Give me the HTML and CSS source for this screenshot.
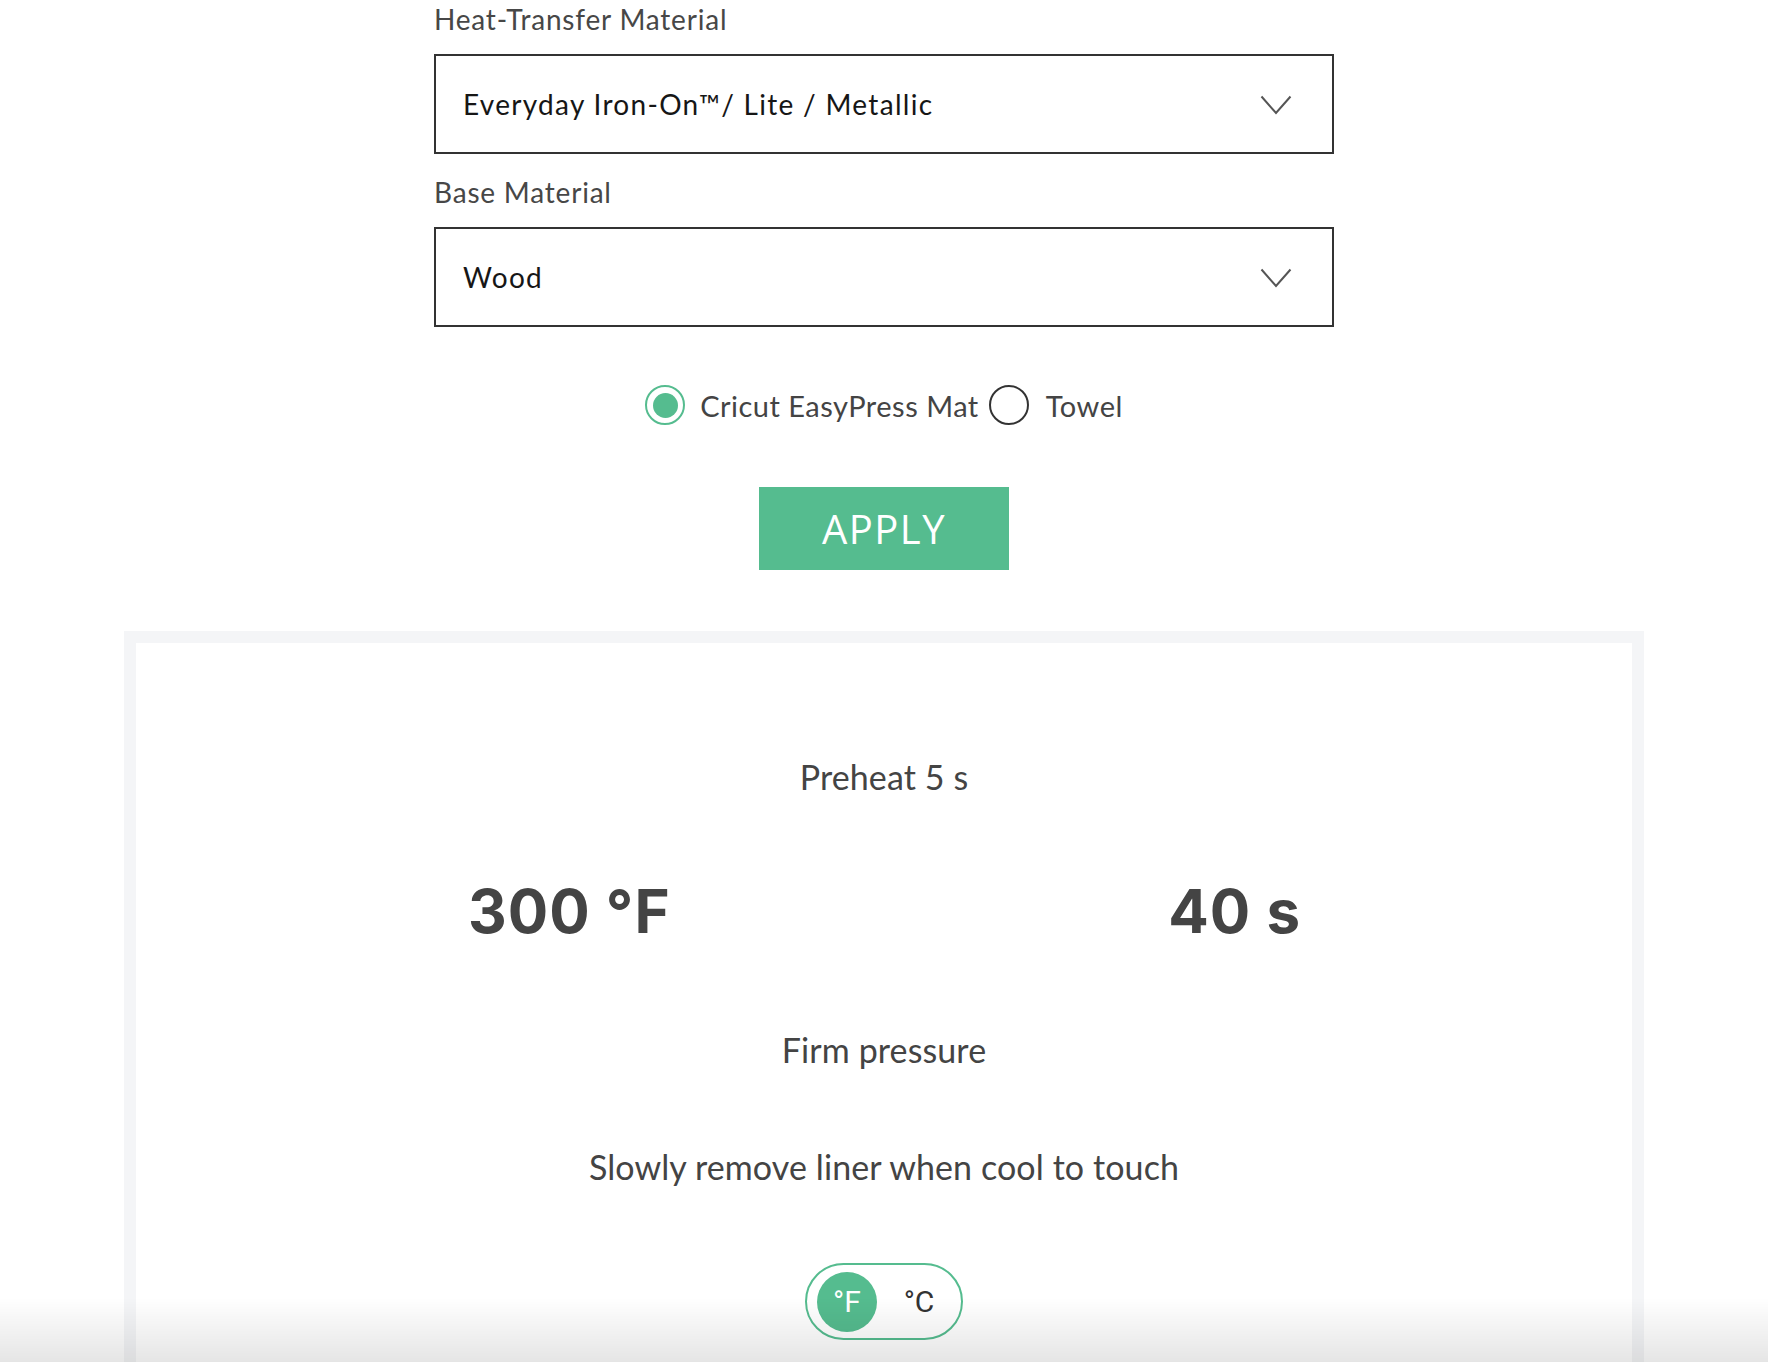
FILE: index.html
```html
<!DOCTYPE html>
<html lang="en">
<head>
<meta charset="utf-8">
<title>Heat Guide</title>
<link rel="stylesheet" href="styles.css">
</head>
<body>
<main class="page">
  <section class="form">
    <div class="label">Heat-Transfer Material</div>
    <div class="select">
      <span class="select-text">Everyday Iron-On™/ Lite / Metallic</span>
      <svg class="chevron" width="32" height="20" viewBox="0 0 32 20"><polyline points="1.5,1.5 16,18 30.5,1.5" fill="none" stroke="#555" stroke-width="2"/></svg>
    </div>
    <div class="label label-second">Base Material</div>
    <div class="select">
      <span class="select-text">Wood</span>
      <svg class="chevron" width="32" height="20" viewBox="0 0 32 20"><polyline points="1.5,1.5 16,18 30.5,1.5" fill="none" stroke="#555" stroke-width="2"/></svg>
    </div>
    <div class="radios">
      <span class="radio radio-on"><span class="dot"></span></span>
      <span class="radio-label">Cricut EasyPress Mat</span>
      <span class="radio"></span>
      <span class="radio-label radio-label-last">Towel</span>
    </div>
    <div class="apply-wrap"><button class="apply">APPLY</button></div>
  </section>
  <section class="card">
    <div class="line">Preheat 5 s</div>
    <div class="values">
      <span class="value">300 °F</span>
      <span class="value">40 s</span>
    </div>
    <div class="line line-pressure">Firm pressure</div>
    <div class="line line-liner">Slowly remove liner when cool to touch</div>
    <div class="toggle-wrap">
      <div class="toggle">
        <span class="unit unit-on">°F</span>
        <span class="unit">°C</span>
      </div>
    </div>
  </section>
</main>
<div class="shade"></div>
</body>
</html>
```

FILE: styles.css
```css
* { box-sizing: border-box; }
html, body { margin: 0; padding: 0; background: #fff; }
body { font-family: Lato, "Noto Sans", sans-serif; color: #444; overflow: hidden; }
.page { width: 1768px; }
.form { width: 900px; margin: 0 auto; padding-top: 4px; display: flex; flex-direction: column; }
.label { font-size: 28px; line-height: 30px; color: #474747; letter-spacing: 0.8px; margin-bottom: 20px; }
.label-second { margin-top: 23px; }
.select { height: 100px; border: 2px solid #333; display: flex; align-items: center; justify-content: space-between; padding: 0 40px 0 27px; }
.select-text { font-size: 28px; color: #161616; letter-spacing: 1.3px; }
.chevron { display: block; margin-top: 2px; }
.radios { display: flex; align-items: center; justify-content: center; margin-top: 58px; height: 40px; }
.radio { width: 40px; height: 40px; border: 2px solid #333; border-radius: 50%; display: flex; align-items: center; justify-content: center; flex: none; }
.radio-on { border-color: #55bc8f; }
.dot { width: 25px; height: 25px; border-radius: 50%; background: #55bc8f; }
.radio-label { font-size: 29px; color: #444; margin-left: 15px; margin-right: 10px; letter-spacing: 0.5px; }
.radio-label-last { margin-left: 17px; margin-right: 0; }
.apply-wrap { display: flex; justify-content: center; margin-top: 62px; }
.apply { width: 250px; height: 83px; border: 0; background: #55bc8f; color: #fff; font-family: "Open Sans", sans-serif; font-size: 40px; letter-spacing: 1.5px; padding: 0; }
.card { margin: 61px 124px 0; border: 12px solid #f4f5f7; border-bottom: 0; min-height: 800px; padding-top: 114px; display: flex; flex-direction: column; align-items: center; }
.line { font-size: 34px; line-height: 40px; color: #444; letter-spacing: 0.1px; }
.values { align-self: stretch; display: flex; justify-content: space-between; padding: 0 331px 0 332px; margin-top: 78px; }
.value { font-family: Inter, sans-serif; font-weight: 700; font-size: 60px; line-height: 72px; color: #444; letter-spacing: 1px; }
.line-pressure { margin-top: 83px; }
.line-liner { margin-top: 77px; }
.toggle-wrap { margin-top: 76px; }
.toggle { width: 158px; height: 77px; border: 2px solid #55bc8f; border-radius: 40px; display: flex; align-items: center; padding-left: 10px; }
.unit { font-family: Roboto, sans-serif; font-size: 30px; color: #333; flex: 1; text-align: center; }
.unit-on { flex: none; width: 60px; height: 60px; border-radius: 50%; background: #55bc8f; color: #fff; display: flex; align-items: center; justify-content: center; }
.shade { position: fixed; left: 0; right: 0; bottom: 0; height: 64px; background: linear-gradient(to bottom, rgba(0,0,0,0), rgba(0,0,0,0.1)); pointer-events: none; }
```
